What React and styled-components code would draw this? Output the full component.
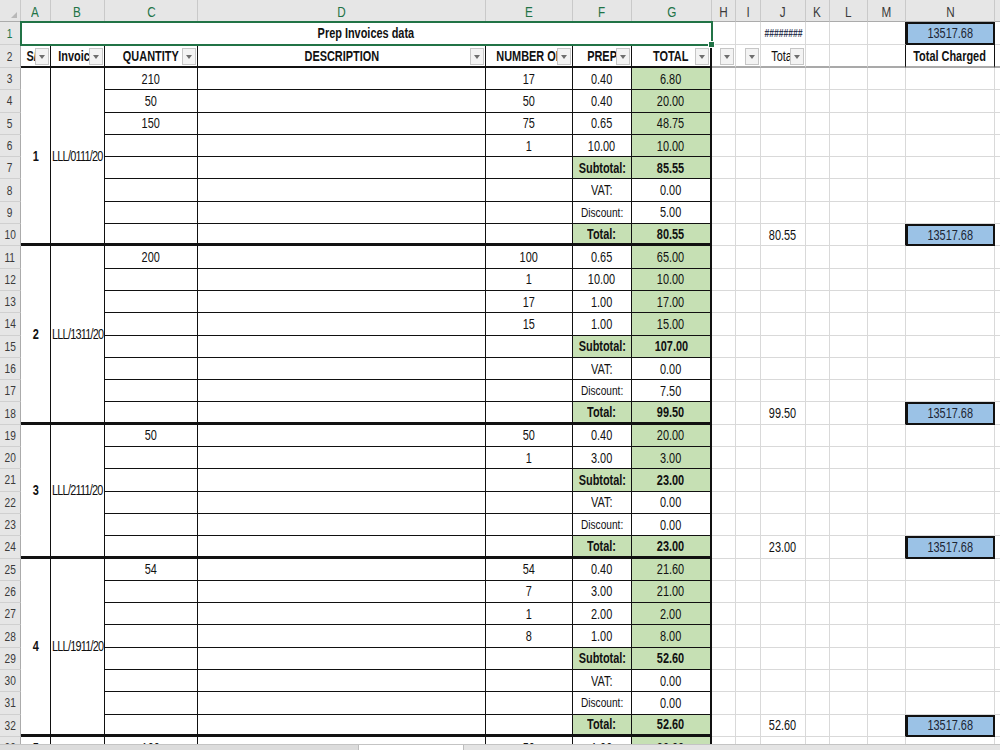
import React from "react";
import styled, { createGlobalStyle, css } from "styled-components";

const GlobalStyle = createGlobalStyle`
  html, body { margin: 0; padding: 0; background: #fff; overflow: hidden; }
  body {
    font-family: "Liberation Sans", Arial, sans-serif;
  }
`;

// Sheet glyphs are drawn in a narrow cut of the sans face.
const NARROW = 0.78;

const COLUMN_WIDTHS = [21, 30, 54, 93, 288, 87, 59, 80, 24, 25, 45, 24, 38, 38, 89, 64];
const LETTERS = ["A", "B", "C", "D", "E", "F", "G", "H", "I", "J", "K", "L", "M", "N", "O"];

const LINES = {
  g: "1px solid #d9d9d9",
  k: "1px solid #111",
  m: "2px solid #111",
  T: "3px solid #111",
  f: "2px solid #a9a9a9",
};

const FILLS = {
  none: "#fff",
  green: "#c6e0b4",
  blue: "#9bc2e6",
};

const Window = styled.div`
  width: 1000px;
  height: 750px;
  display: flex;
  flex-direction: column;
  background: #fff;
  overflow: hidden;
`;

const Sheet = styled.div`
  flex: 1;
  min-height: 0;
  overflow: hidden;
  display: grid;
  grid-template-columns: ${COLUMN_WIDTHS.map((w) => `${w}px`).join(" ")};
  grid-template-rows: 22px 23px 23px;
  grid-auto-rows: 22.3px;
  align-content: start;
`;

const Txt = styled.span`
  display: inline-block;
  white-space: nowrap;
  letter-spacing: ${(p) => (p.$tight ? "-1px" : "normal")};
  transform: scaleX(${NARROW});
  transform-origin: ${(p) => (p.$left ? "left center" : "center center")};
`;

const ColHead = styled.div`
  box-sizing: border-box;
  display: flex;
  align-items: center;
  justify-content: center;
  padding-top: 2px;
  background: #e6e6e6;
  border-right: 1px solid #c9c9c9;
  border-bottom: 1px solid #ababab;
  font-size: 15px;
  color: ${(p) => (p.$active ? "#217346" : "#3a3a3a")};
`;

const Corner = styled(ColHead)`
  position: relative;
  &::after {
    content: "";
    position: absolute;
    right: 3px;
    bottom: 3px;
    border-left: 6px solid transparent;
    border-bottom: 6px solid #b8b8b8;
  }
`;

const RowHead = styled.div`
  box-sizing: border-box;
  display: flex;
  align-items: center;
  justify-content: center;
  background: #e6e6e6;
  border-right: 1px solid #ababab;
  border-bottom: 1px solid #d0d0d0;
  font-size: 13px;
  color: ${(p) => (p.$active ? "#217346" : "#3a3a3a")};
`;

const CellBox = styled.div`
  position: relative;
  box-sizing: border-box;
  min-width: 0;
  display: flex;
  align-items: center;
  justify-content: ${(p) => (p.$align === "left" ? "flex-start" : "center")};
  padding: 0 ${(p) => (p.$align === "left" ? 1 : 2)}px;
  grid-row: span ${(p) => p.$rows || 1};
  grid-column: span ${(p) => p.$cols || 1};
  border-right: ${(p) => LINES[p.$r || "g"]};
  border-bottom: ${(p) => LINES[p.$b || "g"]};
  background: ${(p) => FILLS[p.$fill || "none"]};
  font-size: ${(p) => (p.$small ? 13 : 14)}px;
  font-weight: ${(p) => (p.$bold ? 700 : 400)};
  color: ${(p) => p.$ink || "#111"};
  white-space: nowrap;
  overflow: hidden;
  ${(p) =>
    p.$boxed &&
    css`
      outline: 2px solid #111;
      outline-offset: -2px;
      z-index: 1;
      color: #1c2533;
    `}
  ${(p) =>
    p.$selected &&
    css`
      overflow: visible;
      outline: 2px solid #217346;
      outline-offset: -1px;
      z-index: 2;
      &::after {
        content: "";
        position: absolute;
        right: -4px;
        bottom: -4px;
        width: 5px;
        height: 5px;
        background: #217346;
        border: 1px solid #fff;
      }
    `}
`;

const HeadLabel = styled(Txt)`
  font-weight: ${(p) => (p.$plain ? 400 : 700)};
`;

const FilterButton = styled.span`
  position: absolute;
  right: 1px;
  top: 3px;
  width: 14px;
  height: 17px;
  box-sizing: border-box;
  background: #f3f3f3;
  border: 1px solid #c6c6c6;
  display: flex;
  align-items: center;
  justify-content: center;
  &::before {
    content: "";
    border-left: 3px solid transparent;
    border-right: 3px solid transparent;
    border-top: 4px solid #6e6e6e;
  }
`;

const Hashes = styled(Txt)`
  font-size: 11px;
  font-weight: 700;
  color: #2d3550;
`;

const Footer = styled.div`
  flex-shrink: 0;
  height: 5px;
  display: flex;
  border-top: 1px solid #c4c4c4;
`;

const TabStrip = styled.div`
  width: 358px;
  background: #dcdcdc;
  border-right: 1px solid #bdbdbd;
`;

const TabGap = styled.div`
  width: 104px;
  background: #fff;
`;

const ScrollTrack = styled.div`
  flex: 1;
  background: #e4e4e4;
  border-left: 1px solid #bdbdbd;
`;

// A worksheet cell; its value is set in the narrow face.
function SheetCell({ children, $tight, ...props }) {
  const empty = children === undefined || children === null || children === "";
  return (
    <CellBox {...props}>
      {empty ? null : (
        <Txt $left={props.$align === "left"} $tight={$tight}>
          {children}
        </Txt>
      )}
    </CellBox>
  );
}

function RowLabel({ children, $active }) {
  return (
    <RowHead $active={$active}>
      <Txt>{children}</Txt>
    </RowHead>
  );
}

const GRAND_TOTAL = "13517.68";

const INVOICES = [
  {
    no: "1",
    ref: "LLL/0111/20",
    items: [
      ["210", "17", "0.40", "6.80"],
      ["50", "50", "0.40", "20.00"],
      ["150", "75", "0.65", "48.75"],
      ["", "1", "10.00", "10.00"],
    ],
    subtotal: "85.55",
    vat: "0.00",
    discount: "5.00",
    total: "80.55",
  },
  {
    no: "2",
    ref: "LLL/1311/20",
    items: [
      ["200", "100", "0.65", "65.00"],
      ["", "1", "10.00", "10.00"],
      ["", "17", "1.00", "17.00"],
      ["", "15", "1.00", "15.00"],
    ],
    subtotal: "107.00",
    vat: "0.00",
    discount: "7.50",
    total: "99.50",
  },
  {
    no: "3",
    ref: "LLL/2111/20",
    items: [
      ["50", "50", "0.40", "20.00"],
      ["", "1", "3.00", "3.00"],
    ],
    subtotal: "23.00",
    vat: "0.00",
    discount: "0.00",
    total: "23.00",
  },
  {
    no: "4",
    ref: "LLL/1911/20",
    items: [
      ["54", "54", "0.40", "21.60"],
      ["", "7", "3.00", "21.00"],
      ["", "1", "2.00", "2.00"],
      ["", "8", "1.00", "8.00"],
    ],
    subtotal: "52.60",
    vat: "0.00",
    discount: "0.00",
    total: "52.60",
  },
  {
    no: "5",
    ref: "",
    items: [["100", "50", "1.00", "20.00"]],
    partial: true,
  },
];

const HEADERS = ["S/N", "Invoice", "QUANTITY", "DESCRIPTION", "NUMBER OF", "PREP", "TOTAL"];

function invoiceLines(inv) {
  const lines = inv.items.map(([qty, count, rate, amount]) => ({
    kind: "item",
    qty,
    count,
    f: rate,
    g: amount,
  }));
  if (inv.partial) return lines;
  return [
    ...lines,
    { kind: "subtotal", f: "Subtotal:", g: inv.subtotal },
    { kind: "vat", f: "VAT:", g: inv.vat },
    { kind: "discount", f: "Discount:", g: inv.discount },
    { kind: "total", f: "Total:", g: inv.total },
  ];
}

function SideColumns({ jValue, boxed }) {
  return (
    <>
      <SheetCell />
      <SheetCell />
      <SheetCell>{jValue}</SheetCell>
      <SheetCell />
      <SheetCell />
      <SheetCell $r={boxed ? "k" : "g"} />
      {boxed ? (
        <SheetCell $fill="blue" $boxed $r="k" $b="k">
          {GRAND_TOTAL}
        </SheetCell>
      ) : (
        <SheetCell />
      )}
      <SheetCell />
    </>
  );
}

function InvoiceBlock({ inv, startRow }) {
  const lines = invoiceLines(inv);
  const n = lines.length;
  return lines.map((line, k) => {
    const row = startRow + k;
    const edge = k === n - 1 && !inv.partial ? "T" : "k";
    const strong = line.kind === "subtotal" || line.kind === "total";
    const greenG = line.kind !== "vat" && line.kind !== "discount";
    return (
      <React.Fragment key={row}>
        <RowLabel>{row}</RowLabel>
        {k === 0 && (
          <SheetCell $rows={n} $r="k" $b={inv.partial ? "g" : "T"} $bold>
            {inv.no}
          </SheetCell>
        )}
        {k === 0 && (
          <SheetCell $rows={n} $r="k" $b={inv.partial ? "g" : "T"} $align="left" $tight>
            {inv.ref}
          </SheetCell>
        )}
        <SheetCell $r="k" $b={edge}>{line.kind === "item" ? line.qty : ""}</SheetCell>
        <SheetCell $r="k" $b={edge} />
        <SheetCell $r="k" $b={edge}>{line.kind === "item" ? line.count : ""}</SheetCell>
        <SheetCell
          $r="k"
          $b={edge}
          $bold={strong}
          $fill={strong ? "green" : "none"}
          $small={line.kind === "discount"}
        >
          {line.f}
        </SheetCell>
        <SheetCell $r="m" $b={edge} $bold={strong} $fill={greenG ? "green" : "none"}>
          {line.g}
        </SheetCell>
        <SideColumns jValue={line.kind === "total" ? line.g : ""} boxed={line.kind === "total"} />
      </React.Fragment>
    );
  });
}

export default function App() {
  let nextRow = 3;
  const blocks = INVOICES.map((inv) => {
    const start = nextRow;
    nextRow += invoiceLines(inv).length;
    return <InvoiceBlock key={inv.no} inv={inv} startRow={start} />;
  });

  return (
    <>
      <GlobalStyle />
      <Window>
        <Sheet>
          <Corner />
          {LETTERS.map((l, i) => (
            <ColHead key={l} $active={i < 7}>
              <Txt>{l}</Txt>
            </ColHead>
          ))}

          <RowLabel $active>1</RowLabel>
          <SheetCell $cols={7} $selected $bold>
            Prep Invoices data
          </SheetCell>
          <SheetCell />
          <SheetCell />
          <CellBox>
            <Hashes>########</Hashes>
          </CellBox>
          <SheetCell />
          <SheetCell />
          <SheetCell $r="k" />
          <SheetCell $fill="blue" $boxed $r="k" $b="k">
            {GRAND_TOTAL}
          </SheetCell>
          <SheetCell />

          <RowLabel>2</RowLabel>
          {HEADERS.map((label, i) => (
            <CellBox key={label} $r={i === 6 ? "m" : "k"} $b="m">
              <HeadLabel>{label}</HeadLabel>
              <FilterButton />
            </CellBox>
          ))}
          <CellBox $b="f">
            <FilterButton />
          </CellBox>
          <CellBox $b="f">
            <FilterButton />
          </CellBox>
          <CellBox $b="f">
            <HeadLabel $plain>Total</HeadLabel>
            <FilterButton />
          </CellBox>
          <SheetCell $b="f" />
          <SheetCell $b="f" />
          <SheetCell $b="f" $r="k" />
          <SheetCell $b="f" $r="k" $bold>
            Total Charged
          </SheetCell>
          <SheetCell $b="f" />

          {blocks}
        </Sheet>
        <Footer>
          <TabStrip />
          <TabGap />
          <ScrollTrack />
        </Footer>
      </Window>
    </>
  );
}
